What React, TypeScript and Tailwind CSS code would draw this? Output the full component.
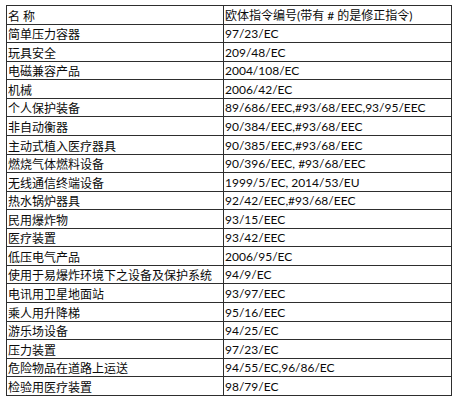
import * as React from "react";

type Row = { name: string; code: string };

const rows: Row[] = [
  { name: "简单压力容器", code: "97/23/EC" },
  { name: "玩具安全", code: "209/48/EC" },
  { name: "电磁兼容产品", code: "2004/108/EC" },
  { name: "机械", code: "2006/42/EC" },
  { name: "个人保护装备", code: "89/686/EEC,#93/68/EEC,93/95/EEC" },
  { name: "非自动衡器", code: "90/384/EEC,#93/68/EEC" },
  { name: "主动式植入医疗器具", code: "90/385/EEC,#93/68/EEC" },
  { name: "燃烧气体燃料设备", code: "90/396/EEC, #93/68/EEC" },
  { name: "无线通信终端设备", code: "1999/5/EC, 2014/53/EU" },
  { name: "热水锅炉器具", code: "92/42/EEC,#93/68/EEC" },
  { name: "民用爆炸物", code: "93/15/EEC" },
  { name: "医疗装置", code: "93/42/EEC" },
  { name: "低压电气产品", code: "2006/95/EC" },
  { name: "使用于易爆炸环境下之设备及保护系统", code: "94/9/EC" },
  { name: "电讯用卫星地面站", code: "93/97/EEC" },
  { name: "乘人用升降梯", code: "95/16/EEC" },
  { name: "游乐场设备", code: "94/25/EC" },
  { name: "压力装置", code: "97/23/EC" },
  { name: "危险物品在道路上运送", code: "94/55/EC,96/86/EC" },
  { name: "检验用医疗装置", code: "98/79/EC" },
];

const font = "font-['Lato','Noto_Sans_CJK_SC',sans-serif]";

function TableRow({ name, code }: Row) {
  return (
    <div className="flex h-[18.57px] border-b border-[#2e2e2e]">
      <div className="w-[217px] shrink-0 border-r border-[#2e2e2e] pl-[1px] flex items-end pb-[1px] leading-none">
        {name}
      </div>
      <div className="flex-1 pl-[1px] flex items-end pb-[2px] leading-none">
        {code}
      </div>
    </div>
  );
}

export default function App() {
  return (
    <div className={`w-[458px] h-[400px] bg-white pt-[5px] pl-[6px] text-[12px] text-[#0a0a0a] ${font}`}>
      <div className="w-[446px] border-t border-l border-r border-[#2e2e2e]">
        <TableRow name="名 称" code="欧体指令编号(带有 # 的是修正指令)" />
        {rows.map((r) => (
          <TableRow key={r.name} {...r} />
        ))}
      </div>
    </div>
  );
}
